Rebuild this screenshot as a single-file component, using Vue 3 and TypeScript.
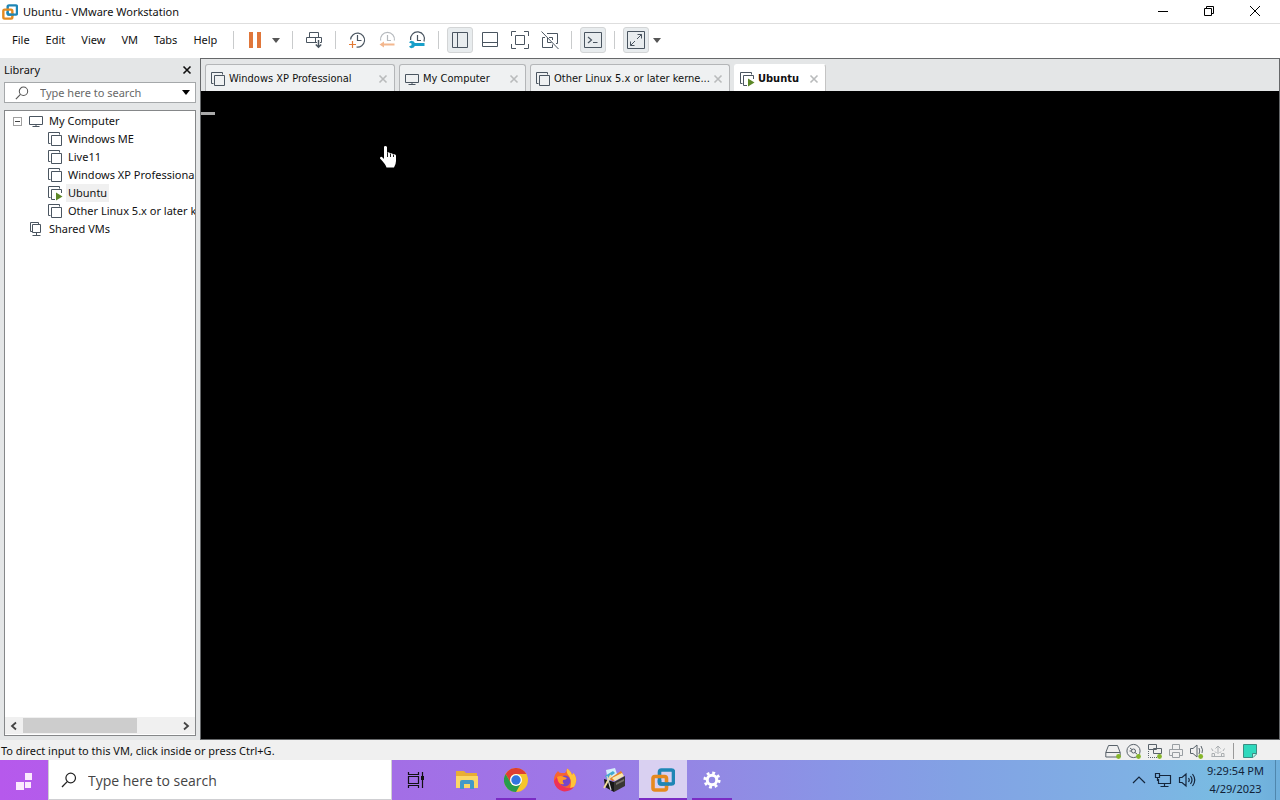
<script setup lang="ts">
import { ref } from 'vue'

interface TreeItem {
  label: string
  icon: string
  selected?: boolean
}
interface Tab {
  label: string
  icon: string
  size: string
}
interface Tool {
  icon: string
  label: string
  on?: boolean
}

const menus: string[] = ['File', 'Edit', 'View', 'VM', 'Tabs', 'Help']
const machines: TreeItem[] = [
  { label: 'Windows ME', icon: 'i-vm' },
  { label: 'Live11', icon: 'i-vm' },
  { label: 'Windows XP Professional', icon: 'i-vm' },
  { label: 'Ubuntu', icon: 'i-vm-on', selected: true },
  { label: 'Other Linux 5.x or later k', icon: 'i-vm' },
]
const tabs: Tab[] = [
  { label: 'Windows XP Professional', icon: 'i-vm', size: 'wide' },
  { label: 'My Computer', icon: 'i-monitor', size: 'medium' },
  { label: 'Other Linux 5.x or later kerne...', icon: 'i-vm', size: 'widest' },
  { label: 'Ubuntu', icon: 'i-vm-on', size: 'small' },
]
const toolGroups: Tool[][] = [
  [{ icon: 'i-send', label: 'Send Ctrl+Alt+Del' }],
  [
    { icon: 'i-snap', label: 'Take snapshot' },
    { icon: 'i-revert', label: 'Revert snapshot' },
    { icon: 'i-manage', label: 'Manage snapshots' },
  ],
  [
    { icon: 'i-side', label: 'Show library', on: true },
    { icon: 'i-bottom', label: 'Show thumbnail bar' },
    { icon: 'i-full', label: 'Full screen' },
    { icon: 'i-unity', label: 'Unity' },
  ],
  [{ icon: 'i-console', label: 'Console view', on: true }],
  [{ icon: 'i-stretch', label: 'Stretch guest', on: true }],
]
const devices: Tool[] = [
  { icon: 'i-disk', label: 'Hard disk' },
  { icon: 'i-cd', label: 'CD/DVD' },
  { icon: 'i-net', label: 'Network adapter' },
  { icon: 'i-printer', label: 'Printer' },
  { icon: 'i-sound', label: 'Sound card' },
  { icon: 'i-usb', label: 'USB' },
]
const apps: Tool[] = [
  { icon: 'i-files', label: 'File Explorer' },
  { icon: 'i-chrome', label: 'Google Chrome', on: true },
  { icon: 'i-firefox', label: 'Firefox' },
  { icon: 'i-toolbox', label: 'Toolbox' },
  { icon: 'i-vmware', label: 'VMware Workstation', on: true },
  { icon: 'i-gear', label: 'Settings', on: true },
]
const activeTab = ref(3)
const libraryQuery = ref('')
const taskbarQuery = ref('')
</script>

<template>
  <div class="desktop">
    <svg class="defs" aria-hidden="true">
      <symbol id="i-vmware" viewBox="0 0 24 24">
        <rect x="8.5" y="2" width="14" height="14" rx="2" fill="none" stroke="#1f86b5" stroke-width="3.6" />
        <rect x="2" y="8.5" width="13.5" height="13.5" rx="2" fill="none" stroke="#e58a1f" stroke-width="3.6" />
        <path d="M8.5 12V14.2Q8.5 16 10.3 16H18" fill="none" stroke="#1f86b5" stroke-width="3.6" />
      </symbol>
      <symbol id="i-vm" viewBox="0 0 16 16">
        <path d="M3.5 12.5H1.5V1.5H12.5V3.5M4.5 4.5H14.5V14.5H4.5Z" fill="none" stroke="#4a5560" />
      </symbol>
      <symbol id="i-vm-on" viewBox="0 0 16 16">
        <path d="M3.5 12.5H1.5V1.5H12.5V3.5M8 14.5H4.5V4.5H14.5V8" fill="none" stroke="#4a5560" />
        <path d="M9 7.5L15.5 11.5L9 15.5Z" fill="#5c8727" />
      </symbol>
      <symbol id="i-monitor" viewBox="0 0 16 16">
        <path d="M1.5 3.5H14.5V11.5H1.5ZM8 11.5V13.5M4.5 13.5H11.5" fill="none" stroke="#4a5560" />
      </symbol>
      <symbol id="i-shared" viewBox="0 0 16 16">
        <path d="M4 10.5H2.5V1.5H10.5V3M4.5 3.5H12.5V11.5H4.5ZM8.5 11.5V14M4.5 14.5H12.5" fill="none" stroke="#4a5560" />
      </symbol>
      <symbol id="i-search" viewBox="0 0 16 16">
        <circle cx="9.7" cy="6" r="4.8" fill="none" stroke="currentColor" stroke-width="1.2" />
        <path d="M6.2 9.6L1 15" fill="none" stroke="currentColor" stroke-width="1.3" />
      </symbol>
      <symbol id="i-x" viewBox="0 0 10 10">
        <path d="M1.5 1.5L8.5 8.5M8.5 1.5L1.5 8.5" stroke="currentColor" stroke-width="1.6" fill="none" />
      </symbol>
      <symbol id="i-send" viewBox="0 0 20 20">
        <path d="M5.5 7.5V2.5H14.5V7.5M13 12.5H2.5V7.5H17.5V12.5H16M11.5 7.5V12.5" fill="none" stroke="#4a5560" />
        <path d="M14.5 10V17M11.8 14.5L14.5 17.2L17.2 14.5" fill="none" stroke="#4a5560" stroke-width="1.5" />
      </symbol>
      <symbol id="i-snap" viewBox="0 0 20 20">
        <path d="M3.6 9.5A7 7 0 1 1 9.5 17M10.5 5V10.5H14.5" fill="none" stroke="#4a5560" stroke-width="1.2" />
        <path d="M5.5 11V18M2 14.5H9" stroke="#e27b36" stroke-width="1.2" fill="none" />
      </symbol>
      <symbol id="i-revert" viewBox="0 0 20 20">
        <path d="M3.6 10.5A7 7 0 1 1 17.4 10.5M10.5 5V10.5H14" fill="none" stroke="#b5b9bd" stroke-width="1.2" />
        <path d="M2.5 14.5L7 11.5V13.5H17.5V15.5H7V17.5Z" fill="#f3b78e" />
      </symbol>
      <symbol id="i-manage" viewBox="0 0 20 20">
        <path d="M3.6 10A7 7 0 1 1 17 11.5M10.5 5V10.5H14" fill="none" stroke="#4a5560" stroke-width="1.2" />
        <path d="M2 12.5L4.5 13.5V15.3L2 16.5A3.2 3.2 0 0 0 7.8 16H17.5V13H7.8A3.2 3.2 0 0 0 2 12.5Z" fill="#189fc9" />
      </symbol>
      <symbol id="i-side" viewBox="0 0 20 20">
        <path d="M2.5 2.5H17.5V17.5H2.5ZM7.5 2.5V17.5" fill="none" stroke="#4a5560" />
      </symbol>
      <symbol id="i-bottom" viewBox="0 0 20 20">
        <path d="M2.5 2.5H17.5V16.5H2.5ZM2.5 12.5H17.5" fill="none" stroke="#4a5560" />
      </symbol>
      <symbol id="i-full" viewBox="0 0 20 20">
        <path d="M6 1.5H1.5V6M14 1.5H18.5V6M6 18.5H1.5V14M14 18.5H18.5V14M5.5 5.5H14.5V14.5H5.5Z" fill="none" stroke="#4a5560" />
      </symbol>
      <symbol id="i-unity" viewBox="0 0 20 20">
        <path d="M7 3.5H17.5V13.5H16M5 7.5H2.5V17.5H12.5V14.5M7.5 8V12.5H11.5M12.5 10V7.5H9M1.5 1.5L18.5 19" fill="none" stroke="#4a5560" />
      </symbol>
      <symbol id="i-console" viewBox="0 0 20 20">
        <path d="M1.5 2.5H18.5V17.5H1.5Z" fill="none" stroke="#4a5560" />
        <path d="M5 7L8.5 10L5 13M10 12.5H14.5" fill="none" stroke="#4a5560" stroke-width="1.2" />
      </symbol>
      <symbol id="i-stretch" viewBox="0 0 20 20">
        <path d="M1.5 1.5H18.5V18.5H1.5Z" fill="none" stroke="#4a5560" />
        <path d="M11.5 4.5H15.5V8.5M15.5 4.5L11 9M9 11L4.5 15.5M4.5 11.5V15.5H8.5" fill="none" stroke="#4a5560" />
      </symbol>
      <symbol id="i-disk" viewBox="0 0 16 16">
        <path d="M.8 9.5L3.5 2.5H12.5L15.2 9.5V14H.8ZM.8 9.5H15.2" fill="none" stroke="#59626a" />
        <circle cx="13.5" cy="13.5" r="2.4" fill="#86b52b" />
      </symbol>
      <symbol id="i-cd" viewBox="0 0 16 16">
        <circle cx="7.5" cy="8" r="6.6" fill="none" stroke="#59626a" />
        <circle cx="7.5" cy="8" r="2" fill="none" stroke="#59626a" />
        <path d="M4 5L6 6.6M9 9.5L11 11M3.5 8H5" stroke="#59626a" />
        <circle cx="12.5" cy="13.5" r="2.4" fill="#86b52b" />
      </symbol>
      <symbol id="i-net" viewBox="0 0 16 16">
        <path d="M1.5 1.5H9.5V6.5H1.5ZM6.5 8V5.5H14.5V10.5H6.5Z" fill="#eee" stroke="#59626a" />
        <path d="M1.5 8V14.5H10" fill="none" stroke="#59626a" stroke-dasharray="1 1" />
        <circle cx="12.5" cy="13.5" r="2.4" fill="#86b52b" />
      </symbol>
      <symbol id="i-printer" viewBox="0 0 16 16">
        <path d="M4.5 6V1.5H11.5V6M4 12.5H1.5V6.5H14.5V12.5H12M4.5 9.5H11.5V14.5H4.5Z" fill="none" stroke="#999ea2" />
      </symbol>
      <symbol id="i-sound" viewBox="0 0 16 16">
        <path d="M1.5 5.5H4L8 2V14L4 10.5H1.5ZM10 5Q11.5 8 10 11M12 3Q14.5 7 13 10" fill="none" stroke="#59626a" />
        <circle cx="11.7" cy="13.5" r="2.4" fill="#86b52b" />
      </symbol>
      <symbol id="i-usb" viewBox="0 0 16 16">
        <path d="M2 13.5V10.5H4.5V13.5H11.5V10.5H14V13.5M3 8L1.5 5.5M13 8L14.5 5.5M8 11V3.5M5.5 5.500L8 3L10.5 5.500M5 8.500L6.500 10M11 8.500L9.500 10M1.500 13.500H14.500" fill="none" stroke="#aaaeb1" />
      </symbol>
      <symbol id="i-files" viewBox="0 0 24 24">
        <path d="M1 3H9L11 5H22V20H1Z" fill="#e8ad35" />
        <path d="M1 8H23V20H1Z" fill="#fbd767" />
        <path d="M5 21V14Q5 12 7 12H17Q19 12 19 14V21H15V16H9V21Z" fill="#4399c8" />
      </symbol>
      <symbol id="i-chrome" viewBox="0 0 24 24">
        <circle cx="12" cy="12" r="12" fill="#f6c52c" />
        <path d="M1.6 6A12 12 0 0 1 22.4 6H12A6 6 0 0 0 6.8 9L6.8 15Z" fill="#df3e32" />
        <path d="M1.6 6L6.8 15Q9 18 12 18L17.2 15L12 24A12 12 0 0 1 1.6 6Z" fill="#289b4c" />
        <circle cx="12" cy="12" r="6" fill="#fff" />
        <circle cx="12" cy="12" r="4.7" fill="#3275df" />
      </symbol>
      <symbol id="i-firefox" viewBox="0 0 24 24">
        <path d="M5 3Q6 5 8 5L12 5Q14 3 14 .5Q18 3 19 7L20.5 5Q24 9 23 14A11.3 11.3 0 0 1 1 14Q0 8 5 3Z" fill="#f8652e" />
        <path d="M14 .5Q18 3 19 7L20.5 5Q24 9 23 14Q22 20 16 22Q20 15 16 8Q13 5 14 .5Z" fill="#ffc43a" />
        <path d="M1 13Q2 21 10 23.3Q17 24 21 19Q13 22 7 16L4 9Z" fill="#ee3158" />
        <circle cx="12" cy="13" r="5.4" fill="#7746c8" />
        <path d="M4 9Q8 7 11 9L14 10Q13 12 10 12Q9 14 11 16Q7 17 5 13Z" fill="#ff9a27" />
      </symbol>
      <symbol id="i-toolbox" viewBox="0 0 24 24">
        <path d="M4 2L13 0L16 9L6 13Z" fill="#d4eefa" />
        <path d="M3 8L11 3L13 5L5 11Z" fill="#42a8cf" />
        <path d="M7 11L19 3L21 6L11 13Z" fill="#e88527" />
        <path d="M10 10L20 5L22 8L13 13Z" fill="#f7e7b0" />
        <path d="M2 11L12 14V24L3 19Z" fill="#171717" />
        <path d="M12 14L23 8V18L12 24Z" fill="#383633" />
        <path d="M14 15L22 11V13L14 17Z" fill="#77716a" />
        <path d="M9 7L2 20" stroke="#f2dc9c" stroke-width="1.8" />
        <path d="M5 8L9 22" stroke="#d2d2d2" stroke-width="1.2" />
      </symbol>
      <symbol id="i-gear" viewBox="0 0 24 24">
        <circle cx="12" cy="12" r="5.7" fill="none" stroke="#fff" stroke-width="3.6" />
        <circle cx="12" cy="12" r="8.6" fill="none" stroke="#fff" stroke-width="3.4" stroke-dasharray="3.4 3.354" />
      </symbol>
      <symbol id="i-taskview" viewBox="0 0 18 18">
        <path d="M1.5 1V3.5H11.5V1M1.5 17V14.5H11.5V17M1.5 5.5H11.5V12.5H1.5ZM15.5 1V5M15.5 9V17" fill="none" stroke="#111" stroke-width="1.2" />
        <rect x="14" y="5" width="3" height="4" fill="#111" />
      </symbol>
    </svg>

    <header class="titlebar">
      <svg class="app-icon"><use href="#i-vmware" /></svg>
      <h1>Ubuntu - VMware Workstation</h1>
      <div class="window-buttons">
        <button type="button" aria-label="Minimize">
          <svg viewBox="0 0 12 12"><path d="M1 6.5H11" /></svg>
        </button>
        <button type="button" aria-label="Restore">
          <svg viewBox="0 0 12 12"><path d="M1.5 3.5H8.5V10.5H1.5ZM3.5 3.5V1.5H10.5V8.5H8.5" /></svg>
        </button>
        <button type="button" aria-label="Close">
          <svg viewBox="0 0 12 12"><path d="M1 1L11 11M11 1L1 11" /></svg>
        </button>
      </div>
    </header>

    <div class="toolbar">
      <nav class="menus">
        <button v-for="m in menus" :key="m" type="button">{{ m }}</button>
      </nav>
      <div class="group">
        <button type="button" class="tool" aria-label="Pause">
          <svg viewBox="0 0 20 20"><path d="M4 2H8V18H4ZM12 2H16V18H12Z" fill="#e0763a" /></svg>
        </button>
        <button type="button" class="drop" aria-label="Power options"><span class="caret"></span></button>
      </div>
      <div v-for="(g, n) in toolGroups" :key="n" class="group">
        <button v-for="t in g" :key="t.icon" type="button" class="tool" :class="{ on: t.on }" :aria-label="t.label">
          <svg><use :href="'#' + t.icon" /></svg>
        </button>
      </div>
      <button type="button" class="drop" aria-label="Stretch options"><span class="caret"></span></button>
    </div>

    <div class="workspace">
      <aside class="library">
        <div class="library-head">
          <h2>Library</h2>
          <button type="button" aria-label="Close library"><svg><use href="#i-x" /></svg></button>
        </div>
        <div class="library-search">
          <svg><use href="#i-search" /></svg>
          <input v-model="libraryQuery" type="text" placeholder="Type here to search" aria-label="Search the library" />
          <button type="button" aria-label="Search options"><span class="caret dark"></span></button>
        </div>
        <div class="tree-box">
          <ul class="tree">
            <li>
              <button type="button" class="node root">
                <span class="expander"></span>
                <svg><use href="#i-monitor" /></svg>
                <span class="name">My Computer</span>
              </button>
              <ul>
                <li v-for="m in machines" :key="m.label">
                  <button type="button" class="node leaf">
                    <svg><use :href="'#' + m.icon" /></svg>
                    <span class="name" :class="{ selected: m.selected }">{{ m.label }}</span>
                  </button>
                </li>
              </ul>
            </li>
            <li>
              <button type="button" class="node shared">
                <svg><use href="#i-shared" /></svg>
                <span class="name">Shared VMs</span>
              </button>
            </li>
          </ul>
          <div class="scrollbar">
            <button type="button" aria-label="Scroll left"><svg viewBox="0 0 10 10"><path d="M7 1.5L3 5L7 8.5" /></svg></button>
            <div class="track"><div class="thumb"></div></div>
            <button type="button" aria-label="Scroll right"><svg viewBox="0 0 10 10"><path d="M3 1.5L7 5L3 8.5" /></svg></button>
          </div>
        </div>
      </aside>

      <main class="console">
        <div class="tabs">
          <div v-for="(t, i) in tabs" :key="t.label" class="tab" :class="[t.size, { active: i === activeTab }]">
            <button type="button" class="tab-open" @click="activeTab = i">
              <svg><use :href="'#' + t.icon" /></svg>
              <span>{{ t.label }}</span>
            </button>
            <button type="button" class="tab-close" :aria-label="'Close ' + t.label"><svg><use href="#i-x" /></svg></button>
          </div>
        </div>
        <div class="screen">
          <div class="text-cursor"></div>
          <svg class="pointer" viewBox="0 0 18 24">
            <path d="M5 1.5Q7 .5 8 2V8Q10 6.5 11 8.5Q13 7.5 14 9.5Q16 8.5 17 10.5V16Q17 19 15 22.5H7.5Q6.5 19 1 13.5Q1 11 3 12L5 14Z" fill="#fff" />
            <path d="M8.5 8V12M11.5 9V12M14.5 10V12" stroke="#222" />
          </svg>
        </div>
      </main>
    </div>

    <div class="statusbar">
      <span>To direct input to this VM, click inside or press Ctrl+G.</span>
      <div class="devices">
        <button v-for="d in devices" :key="d.icon" type="button" :aria-label="d.label"><svg><use :href="'#' + d.icon" /></svg></button>
      </div>
      <button type="button" class="messages" aria-label="Messages">
        <svg viewBox="0 0 16 16"><path d="M1.5 1.5H14.5V11L11 14.5H1.5Z" fill="#2fd9bd" stroke="#3c8d83" /><path d="M14.5 10.5H10.5V14.5" fill="#bff3ea" stroke="#3c8d83" /></svg>
      </button>
    </div>

    <footer class="taskbar">
      <button type="button" class="start" aria-label="Start">
        <svg viewBox="0 0 20 20"><path d="M11 1H18V8H11ZM2 10H10V18H2ZM11 10H17V16H11Z" fill="#fbe9fd" /></svg>
      </button>
      <label class="task-search">
        <svg><use href="#i-search" /></svg>
        <input v-model="taskbarQuery" type="text" placeholder="Type here to search" aria-label="Search Windows" />
      </label>
      <button type="button" class="app task-view" aria-label="Task view"><svg><use href="#i-taskview" /></svg></button>
      <button v-for="a in apps" :key="a.icon" type="button" class="app" :class="{ running: a.on, current: a.icon === 'i-vmware', small: a.icon === 'i-gear' }" :aria-label="a.label">
        <svg><use :href="'#' + a.icon" /></svg>
      </button>
      <div class="tray">
        <button type="button" aria-label="Hidden icons"><svg viewBox="0 0 18 18"><path d="M3 12L9 6L15 12" /></svg></button>
        <button type="button" aria-label="Network"><svg viewBox="0 0 18 18"><path d="M5 4.5H16.5V12.5H4.5V8M10.5 12.5V15.5M6.5 15.5H14.5M1.5 2.5H5.5V6.5H1.5ZM3.5 6.5V10" /></svg></button>
        <button type="button" aria-label="Volume"><svg viewBox="0 0 18 18"><path d="M1.5 6.5H4L8 3V15L4 11.5H1.5ZM10.5 7Q12 9 10.5 11M12.5 5Q15.5 9 12.5 13M14.5 3Q19 9 14.5 15" /></svg></button>
      </div>
      <button type="button" class="clock"><span>9:29:54 PM</span><span>4/29/2023</span></button>
      <button type="button" class="peek" aria-label="Show desktop"></button>
    </footer>
  </div>
</template>

<style>
body {
  margin: 0;
}
</style>

<style scoped>
* {
  box-sizing: border-box;
}
.desktop {
  display: flex;
  flex-direction: column;
  height: 100vh;
  background: #e4e6e7;
  color: #111;
  font: 11px/18px "Noto Sans", "Open Sans", sans-serif;
}
.defs {
  position: absolute;
  width: 0;
  height: 0;
}
button {
  display: flex;
  align-items: center;
  justify-content: center;
  padding: 0;
  border: 0;
  background: none;
  color: inherit;
  font: inherit;
  white-space: nowrap;
}
svg {
  display: block;
  flex: none;
  width: 16px;
  height: 16px;
}
h1,
h2,
ul {
  margin: 0;
  padding: 0;
  font: inherit;
  list-style: none;
}
input {
  flex: 1;
  min-width: 0;
  padding: 0;
  border: 0;
  outline: 0;
  background: none;
  font: inherit;
}
input::placeholder {
  color: #686868;
  opacity: 1;
}
.caret {
  border: 4px solid transparent;
  border-top: 5px solid #555;
  border-bottom: 0;
}
.caret.dark {
  border-top-color: #000;
}

.titlebar {
  display: flex;
  flex: none;
  align-items: center;
  height: 24px;
  padding-left: 2px;
  border-bottom: 1px solid #dedede;
  background: #fff;
}
.app-icon {
  margin-right: 5px;
}
.window-buttons {
  display: flex;
  height: 22px;
  padding-bottom: 2px;
  margin-left: auto;
  margin-right: 2px;
}
.window-buttons button {
  width: 46px;
}
.window-buttons svg {
  width: 12px;
  height: 12px;
  fill: none;
  stroke: #000;
}

.toolbar {
  display: flex;
  flex: none;
  align-items: center;
  height: 34px;
  padding-bottom: 2px;
  background: #fff;
}
.menus {
  display: flex;
  gap: 16px;
  width: 225px;
  padding-left: 12px;
}
.group {
  display: flex;
  gap: 4px;
  align-items: center;
}
.group::before {
  width: 1px;
  height: 18px;
  margin: 0 4px 0 8px;
  background: #c9cbcc;
  content: "";
}
.tool {
  width: 26px;
  height: 26px;
  border: 1px solid transparent;
  border-radius: 3px;
}
.tool.on {
  border-color: #d3d5d6;
  background: #e8ecee;
}
.tool svg {
  width: 20px;
  height: 20px;
}
.drop {
  width: 16px;
  height: 26px;
}
.group .drop {
  margin-left: -4px;
}

.workspace {
  display: flex;
  flex: 1;
  min-height: 0;
}
.library {
  display: flex;
  flex: none;
  flex-direction: column;
  width: 200px;
  padding: 0 4px 4px;
}
.library-head {
  display: flex;
  align-items: center;
  justify-content: space-between;
  height: 24px;
  padding-right: 4px;
}
.library-head svg {
  width: 10px;
  height: 10px;
}
.library-search {
  display: flex;
  align-items: center;
  height: 21px;
  padding-left: 10px;
  border: 1px solid #a5a8aa;
  background: #fff;
  color: #555;
}
.library-search svg {
  width: 14px;
  height: 14px;
  margin-right: 11px;
}
.library-search button {
  width: 18px;
}
.tree-box {
  display: flex;
  flex: 1;
  flex-direction: column;
  margin-top: 7px;
  padding: 1px 0;
  border: 1px solid #858789;
  background: #fff;
}
.tree {
  flex: 1;
  overflow: hidden;
}
.node {
  justify-content: flex-start;
  width: 100%;
  height: 18px;
}
.node svg {
  margin-right: 3px;
}
.node .name {
  padding: 0 2px;
}
.node.root {
  padding-left: 8px;
}
.node.leaf {
  padding-left: 42px;
}
.node.shared {
  padding-left: 23px;
}
.selected {
  background: #f0f0f0;
}
.expander {
  display: flex;
  align-items: center;
  width: 9px;
  height: 9px;
  margin-right: 6px;
  border: 1px solid #a0a0a0;
}
.expander::before {
  width: 5px;
  height: 1px;
  margin-left: 1px;
  background: #444;
  content: "";
}
.scrollbar {
  display: flex;
  height: 17px;
  background: #f0f0f0;
}
.scrollbar button {
  width: 18px;
}
.scrollbar svg {
  width: 10px;
  height: 10px;
  fill: none;
  stroke: #444;
  stroke-width: 1.8;
}
.track {
  flex: 1;
  padding: 1px 0;
}
.thumb {
  width: 74%;
  height: 100%;
  background: #cdcdcd;
}

.console {
  display: flex;
  flex: 1;
  flex-direction: column;
  min-width: 0;
  border: 1px solid #66686a;
}
.tabs {
  display: flex;
  flex: none;
  gap: 4px;
  align-items: flex-end;
  height: 32px;
  padding-left: 4px;
  font: 11px/16px "DejaVu Sans Condensed", "Noto Sans", sans-serif;
}
.tab {
  display: flex;
  align-items: center;
  justify-content: space-between;
  height: 27px;
  padding: 1px 6px 0 4px;
  border: 1px solid #b4b6b8;
  border-bottom: 0;
  border-radius: 3px 3px 0 0;
  background: #eff1f2;
}
.tab.active {
  border-color: #fff #c4c4c4 #fff #fff;
  background: #fff;
  font-weight: bold;
}
.tab.small {
  width: 92px;
}
.tab.medium {
  width: 127px;
}
.tab.wide {
  width: 190px;
}
.tab.widest {
  width: 200px;
}
.tab-open svg {
  margin-right: 3px;
}
.tab-close {
  color: #b9bbbc;
}
.tab-close svg {
  width: 10px;
  height: 10px;
}
.screen {
  position: relative;
  flex: 1;
  background: #000;
}
.text-cursor {
  position: absolute;
  top: 21px;
  left: 0;
  width: 14px;
  height: 3px;
  background: #aaa;
}
.pointer {
  position: absolute;
  top: 54px;
  left: 178px;
  width: 18px;
  height: 24px;
}

.statusbar {
  display: flex;
  flex: none;
  align-items: center;
  height: 20px;
  padding: 2px 22px 0 1px;
  background: #f0f0f0;
}
.devices {
  display: flex;
  gap: 5px;
  margin-left: auto;
}
.messages {
  height: 16px;
  margin-left: 7px;
  padding-left: 8px;
  border-left: 1px solid #999;
}

.taskbar {
  display: flex;
  flex: none;
  height: 40px;
  background: linear-gradient(90deg, #b659ec 0, #a36ee6 31%, #9d78e7 45%, #9289e4 56%, #8995e6 65%, #82a2e4 75%, #7fb0e4 88%, #78bce2 96%, #6eaedb 100%);
}
.start {
  width: 48px;
  padding-top: 4px;
}
.start svg {
  width: 20px;
  height: 20px;
}
.task-search {
  display: flex;
  align-items: center;
  width: 344px;
  padding-left: 12px;
  border: 1px solid #cfcfd2;
  border-top: 0;
  background: #fff;
  color: #222;
  font: 14px/20px "Open Sans", "Noto Sans", sans-serif;
}
.task-search svg {
  margin-right: 11px;
}
.task-search input {
  padding-top: 2px;
}
.task-search input::placeholder {
  color: #444;
}
.app {
  width: 48px;
  margin-right: 1px;
}
.task-view {
  margin-right: 3px;
}
.task-view svg {
  width: 18px;
  height: 18px;
}
.app:not(.task-view) svg {
  width: 24px;
  height: 24px;
}
.app.small:not(.task-view) svg {
  width: 20px;
  height: 20px;
}
.running {
  background: linear-gradient(#7b2cc4, #7b2cc4) center bottom / 40px 2px no-repeat;
}
.current {
  background: linear-gradient(#7b2cc4, #7b2cc4) center bottom / 100% 2px no-repeat #d9d0f1;
}
.tray {
  display: flex;
  gap: 6px;
  margin-left: auto;
}
.tray svg {
  width: 18px;
  height: 18px;
  fill: none;
  stroke: #15263c;
  stroke-width: 1.2;
}
.clock {
  flex-direction: column;
  width: 79px;
  color: #122238;
}
.peek {
  width: 5px;
  border-left: 1px solid #4f86ad;
}
</style>
